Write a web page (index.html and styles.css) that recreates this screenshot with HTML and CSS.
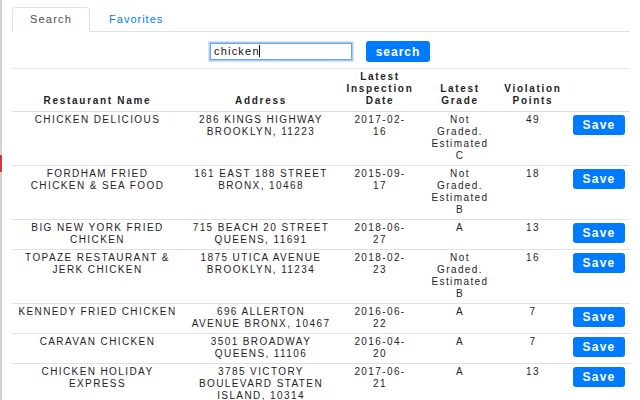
FILE: index.html
```html
<!DOCTYPE html>
<html lang="en">
<head>
<meta charset="utf-8">
<title>Restaurant Search</title>
<link rel="stylesheet" href="styles.css">
</head>
<body>
<div class="page">
  <span class="edge-mark"></span>
  <ul class="tabs">
    <li class="tab active">Search</li>
    <li class="tab link">Favorites</li>
  </ul>
  <div class="search-row">
    <div class="field">chicken<span class="caret"></span></div>
    <button class="btn btn-search">search</button>
  </div>
  <table class="results">
    <thead>
      <tr>
        <th class="c-name">Restaurant Name</th>
        <th class="c-addr">Address</th>
        <th class="c-date">Latest Inspection Date</th>
        <th class="c-grade">Latest Grade</th>
        <th class="c-pts">Violation Points</th>
        <th class="c-save"></th>
      </tr>
    </thead>
    <tbody>
      <tr>
        <td class="c-name">CHICKEN DELICIOUS</td>
        <td class="c-addr">286 KINGS HIGHWAY BROOKLYN, 11223</td>
        <td class="c-date">2017-02-<wbr>16</td>
        <td class="c-grade">Not Graded. Estimated C</td>
        <td class="c-pts">49</td>
        <td class="c-save"><button class="btn btn-save">Save</button></td>
      </tr>
      <tr>
        <td class="c-name">FORDHAM FRIED CHICKEN &amp; SEA FOOD</td>
        <td class="c-addr">161 EAST 188 STREET BRONX, 10468</td>
        <td class="c-date">2015-09-<wbr>17</td>
        <td class="c-grade">Not Graded. Estimated B</td>
        <td class="c-pts">18</td>
        <td class="c-save"><button class="btn btn-save">Save</button></td>
      </tr>
      <tr>
        <td class="c-name">BIG NEW YORK FRIED CHICKEN</td>
        <td class="c-addr">715 BEACH 20 STREET QUEENS, 11691</td>
        <td class="c-date">2018-06-<wbr>27</td>
        <td class="c-grade">A</td>
        <td class="c-pts">13</td>
        <td class="c-save"><button class="btn btn-save">Save</button></td>
      </tr>
      <tr>
        <td class="c-name">TOPAZE RESTAURANT &amp; JERK CHICKEN</td>
        <td class="c-addr">1875 UTICA AVENUE BROOKLYN, 11234</td>
        <td class="c-date">2018-02-<wbr>23</td>
        <td class="c-grade">Not Graded. Estimated B</td>
        <td class="c-pts">16</td>
        <td class="c-save"><button class="btn btn-save">Save</button></td>
      </tr>
      <tr>
        <td class="c-name">KENNEDY FRIED CHICKEN</td>
        <td class="c-addr">696 ALLERTON AVENUE&nbsp;BRONX, 10467</td>
        <td class="c-date">2016-06-<wbr>22</td>
        <td class="c-grade">A</td>
        <td class="c-pts">7</td>
        <td class="c-save"><button class="btn btn-save">Save</button></td>
      </tr>
      <tr>
        <td class="c-name">CARAVAN CHICKEN</td>
        <td class="c-addr">3501 BROADWAY QUEENS, 11106</td>
        <td class="c-date">2016-04-<wbr>20</td>
        <td class="c-grade">A</td>
        <td class="c-pts">7</td>
        <td class="c-save"><button class="btn btn-save">Save</button></td>
      </tr>
      <tr>
        <td class="c-name">CHICKEN HOLIDAY EXPRESS</td>
        <td class="c-addr">3785 VICTORY BOULEVARD STATEN ISLAND, 10314</td>
        <td class="c-date">2017-06-<wbr>21</td>
        <td class="c-grade">A</td>
        <td class="c-pts">13</td>
        <td class="c-save"><button class="btn btn-save">Save</button></td>
      </tr>
    </tbody>
  </table>
</div>
</body>
</html>
```
FILE: styles.css
```css
html, body {
  margin: 0;
  padding: 0;
  background: #fff;
}
body {
  font-family: "Liberation Sans", Helvetica, Arial, sans-serif;
  color: #1f2327;
  overflow: hidden;
}
.page {
  position: relative;
  min-height: 400px;
  padding: 7px 10px 0 12px;
  box-shadow: inset 2px 0 0 #d2d2d2;
}
.edge-mark {
  position: absolute;
  left: 0;
  top: 155px;
  width: 2px;
  height: 17px;
  background: #d23a3a;
}
.tabs {
  display: flex;
  margin: 0;
  padding: 0;
  list-style: none;
  border-bottom: 1px solid #dee2e6;
}
.tab {
  height: 22px;
  padding: 0 17px 2px;
  line-height: 22px;
  margin-bottom: -1px;
  border: 1px solid transparent;
  border-bottom: 0;
  border-radius: 4px 4px 0 0;
  font-size: 11px;
  letter-spacing: 1.2px;
}
.tab.active {
  color: #495057;
  background: #fff;
  border-color: #dee2e6;
}
.tab.link {
  color: #007bff;
  padding: 0 18px 2px;
  letter-spacing: 1px;
}
.search-row {
  display: flex;
  justify-content: center;
  align-items: center;
  gap: 14px;
  margin: 9px 0 6px;
}
.field {
  box-sizing: border-box;
  width: 142px;
  height: 17px;
  padding: 0 3px;
  border: 1px solid #6aa6e6;
  box-shadow: 0 0 0 1.5px #a8cbf3;
  font-size: 11px;
  line-height: 15px;
  letter-spacing: 1.2px;
  color: #111;
  background: #fff;
}
.caret {
  display: inline-block;
  width: 1px;
  height: 12px;
  margin-left: -1px;
  vertical-align: -2px;
  background: #111;
}
.btn {
  box-sizing: border-box;
  border: 0;
  border-radius: 3px;
  background: #007bff;
  color: #fff;
  font-family: "Liberation Sans", Helvetica, Arial, sans-serif;
  font-weight: bold;
  padding: 0;
  cursor: pointer;
}
.btn-search {
  width: 64px;
  height: 21px;
  font-size: 12px;
  letter-spacing: 1px;
  margin-right: 2px;
}
.btn-save {
  display: block;
  width: 52px;
  height: 20px;
  margin-top: 1px;
  font-size: 12px;
  letter-spacing: 1.2px;
}
.results {
  width: 618px;
  table-layout: fixed;
  border-collapse: collapse;
}
.results th,
.results td {
  box-sizing: border-box;
  text-align: center;
  line-height: 12px;
}
.results th {
  vertical-align: bottom;
  font-size: 10px;
  font-weight: bold;
  letter-spacing: 1.7px;
  padding: 2px 3px 4px;
  border-top: 1px solid #e6e8ea;
  border-bottom: 1px solid #dcdfe2;
}
.results td {
  vertical-align: top;
  font-size: 10px;
  letter-spacing: 1.4px;
  padding: 2px 5px 3px;
  border-top: 1px solid #dee2e6;
}
.results th.c-name { width: 171px; }
.results th.c-addr { width: 156px; }
.results th.c-date { width: 82px; }
.results th.c-grade { width: 78px; }
.results th.c-pts { width: 68px; }
.results th.c-save { width: 63px; }
.results td.c-name { padding-left: 5.8px; padding-right: 5.8px; }
.results td.c-addr { padding-left: 7.5px; padding-right: 7.5px; }
.results td.c-date { padding-left: 10px; padding-right: 10px; }
.results td.c-grade { padding-left: 8px; padding-right: 8px; }
.results td.c-save { padding-left: 6px; padding-right: 5px; text-align: left; }
```
